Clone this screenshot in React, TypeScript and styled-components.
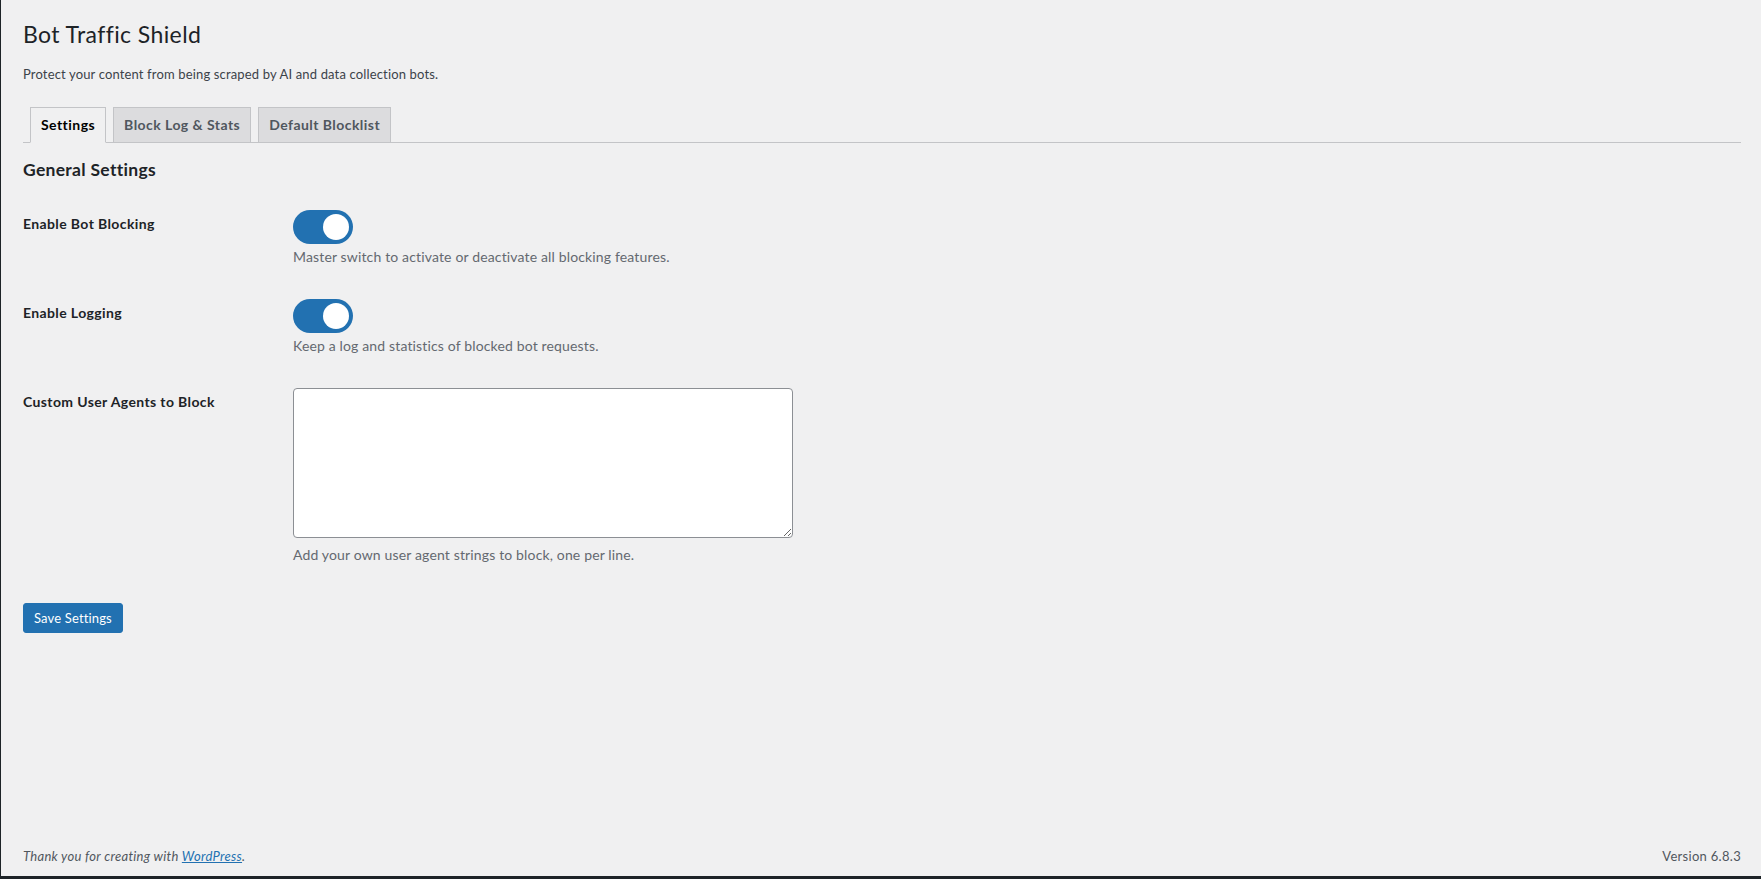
import React, { useState } from 'react'
import styled, { createGlobalStyle } from 'styled-components'

const FONT = `Lato, 'Noto Sans', 'Liberation Sans', sans-serif`

const GlobalStyle = createGlobalStyle`
  html, body {
    margin: 0;
    padding: 0;
    background: #f0f0f1;
  }
  body {
    font-family: ${FONT};
    font-size: 13px;
    letter-spacing: 0.15px;
    color: #3c434a;
  }
  * {
    box-sizing: border-box;
  }
`

const Screen = styled.div`
  position: relative;
  height: 879px;
  display: flex;
  flex-direction: column;
  border-left: 1px solid #1d2327;
  border-bottom: 3px solid #1d2327;
  overflow: hidden;
`

// bits of the admin menu's current-item highlight peeking past the edge
const MenuMark = styled.span<{ $top: number; $height: number }>`
  position: absolute;
  left: -1px;
  width: 1px;
  top: ${(p) => p.$top}px;
  height: ${(p) => p.$height}px;
  background: #2271b1;
`

const Wrap = styled.div`
  flex: 1;
  padding: 0 20px 0 22px;
`

const Title = styled.h1`
  margin: 0;
  padding-top: 19px;
  font-size: 23px;
  font-weight: 400;
  line-height: 30px;
  letter-spacing: 0.4px;
  color: #1d2327;
`

const Intro = styled.p`
  margin: 16px 0 0;
  font-size: 13px;
  line-height: 19px;
  color: #3c434a;
`

const TabBar = styled.nav`
  display: flex;
  margin-top: 23px;
  border-bottom: 1px solid #c3c4c7;
`

const Tab = styled.a<{ $active?: boolean }>`
  display: block;
  margin: 0 0 -1px 7px;
  padding: 5px 10px;
  font-size: 14px;
  font-weight: 700;
  line-height: 24px;
  letter-spacing: 0.45px;
  text-decoration: none;
  border: 1px solid #c3c4c7;
  border-bottom-color: ${(p) => (p.$active ? '#f0f0f1' : '#c3c4c7')};
  background: ${(p) => (p.$active ? '#f0f0f1' : '#dcdcde')};
  color: ${(p) => (p.$active ? '#000' : '#50575e')};
`

const SectionTitle = styled.h2`
  margin: 16px 0 14px;
  font-size: 17.5px;
  font-weight: 700;
  line-height: 22px;
  letter-spacing: 0.3px;
  color: #1d2327;
`

const FormRow = styled.div`
  display: grid;
  grid-template-columns: 270px 1fr;
`

const Label = styled.div`
  padding: 20px 10px 20px 0;
  font-size: 14px;
  font-weight: 700;
  line-height: 18px;
  letter-spacing: 0.38px;
  color: #1d2327;
`

const Field = styled.div`
  padding: 15px 10px 18px 0;
`

const Description = styled.p<{ $gap?: number }>`
  margin: ${(p) => p.$gap ?? 4}px 0 0;
  font-size: 14px;
  line-height: 18px;
  color: #646970;
`

const Switch = styled.button<{ $on: boolean }>`
  position: relative;
  display: block;
  width: 60px;
  height: 34px;
  padding: 0;
  border: none;
  border-radius: 17px;
  background: ${(p) => (p.$on ? '#2271b1' : '#c3c4c7')};
  cursor: pointer;

  &::after {
    content: '';
    position: absolute;
    top: 4px;
    left: ${(p) => (p.$on ? '30px' : '4px')};
    width: 26px;
    height: 26px;
    border-radius: 50%;
    background: #fff;
  }
`

const AgentsBox = styled.textarea`
  display: block;
  width: 500px;
  height: 150px;
  padding: 6px 8px;
  border: 1px solid #8c8f94;
  border-radius: 4px;
  background: #fff;
  font-family: ${FONT};
  font-size: 14px;
  color: #2c3338;
  outline: none;
`

const SaveButton = styled.button`
  display: block;
  margin-top: 21px;
  height: 30px;
  padding: 0 10px;
  border: 1px solid #2271b1;
  border-radius: 3px;
  background: #2271b1;
  color: #fff;
  font-family: ${FONT};
  font-size: 13px;
  letter-spacing: 0.15px;
  line-height: 28px;
  cursor: pointer;
`

const Footer = styled.footer`
  display: flex;
  justify-content: space-between;
  padding: 0 20px 10px 22px;
  font-size: 13px;
  line-height: 19px;
  letter-spacing: 0.3px;
  color: #50575e;
`

const Thanks = styled.span`
  font-style: italic;

  a {
    color: #2271b1;
    text-decoration: underline;
  }
`

const tabs = ['Settings', 'Block Log & Stats', 'Default Blocklist']

export default function App() {
  const [blocking, setBlocking] = useState(true)
  const [logging, setLogging] = useState(true)

  return (
    <>
      <GlobalStyle />
      <Screen>
        <MenuMark $top={372} $height={10} />
        <MenuMark $top={400} $height={10} />
        <Wrap>
          <Title>Bot Traffic Shield</Title>
          <Intro>Protect your content from being scraped by AI and data collection bots.</Intro>
          <TabBar>
            {tabs.map((t, i) => (
              <Tab key={t} $active={i === 0}>
                {t}
              </Tab>
            ))}
          </TabBar>

          <SectionTitle>General Settings</SectionTitle>

          <FormRow>
            <Label>Enable Bot Blocking</Label>
            <Field>
              <Switch $on={blocking} onClick={() => setBlocking(!blocking)} aria-label="Enable Bot Blocking" />
              <Description>Master switch to activate or deactivate all blocking features.</Description>
            </Field>
          </FormRow>
          <FormRow>
            <Label>Enable Logging</Label>
            <Field>
              <Switch $on={logging} onClick={() => setLogging(!logging)} aria-label="Enable Logging" />
              <Description>Keep a log and statistics of blocked bot requests.</Description>
            </Field>
          </FormRow>
          <FormRow>
            <Label>Custom User Agents to Block</Label>
            <Field>
              <AgentsBox />
              <Description $gap={8}>Add your own user agent strings to block, one per line.</Description>
            </Field>
          </FormRow>

          <SaveButton>Save Settings</SaveButton>
        </Wrap>
        <Footer>
          <Thanks>
            Thank you for creating with <a href="#">WordPress</a>.
          </Thanks>
          <span>Version 6.8.3</span>
        </Footer>
      </Screen>
    </>
  )
}
